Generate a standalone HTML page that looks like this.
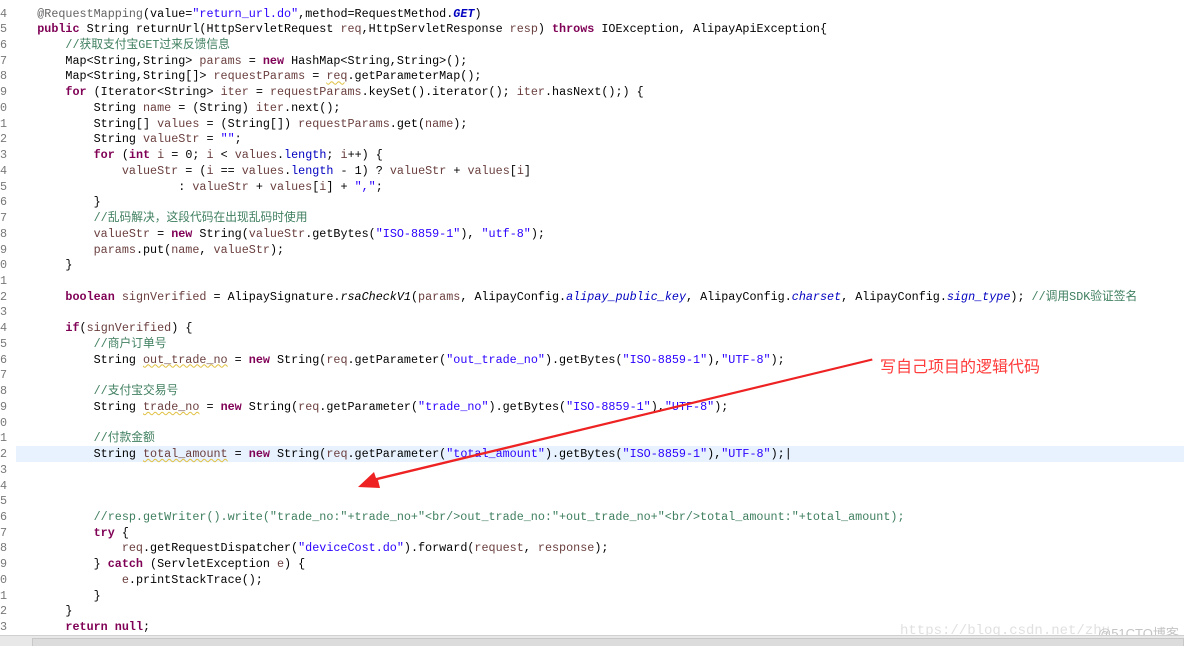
<!DOCTYPE html>
<html><head><meta charset="utf-8"><style>
html,body{margin:0;padding:0;background:#fff;width:1184px;height:646px;overflow:hidden;position:relative}
.hl{position:absolute;left:16px;top:446px;width:1168px;height:15.7px;background:#e8f2fe}
pre{margin:0;position:absolute;top:6.5px;font-family:"Liberation Mono","Noto Sans CJK SC",monospace;font-size:11.75px;line-height:15.74px;color:#000;white-space:pre}
#code{left:9px}
#num{left:0;color:#787878}
.k{color:#7f0055;font-weight:bold}
.s{color:#2a00ff}
.c{color:#3f7f5f}
.v{color:#6a3e3e}
.f{color:#0000c0;font-style:italic}
.a{color:#646464}
.u{text-decoration:underline wavy #e0c040;text-decoration-thickness:1px}
.sb{position:absolute;left:0;top:635px;width:1184px;height:11px;background:#e8e8e8;border-top:1px solid #d0d0d0}
.sb i{position:absolute;left:32px;top:2px;width:1150px;height:8px;background:#dcdcdc;border:1px solid #c8c8c8}
.note{position:absolute;left:880px;top:353px;font-family:"Noto Sans CJK SC",sans-serif;font-size:16px;color:#ff3b3b}
.wm{position:absolute;left:900px;top:623px;font-family:"Liberation Mono",monospace;font-size:14px;color:#e0e0e0}
.wm2{position:absolute;left:1098px;top:623px;font-family:"Liberation Sans","Noto Sans CJK SC",sans-serif;font-size:13px;color:#c4c4c4}
</style></head><body>
<div class="hl"></div>
<pre id="num">4
5
6
7
8
9
0
1
2
3
4
5
6
7
8
9
0
1
2
3
4
5
6
7
8
9
0
1
2
3
4
5
6
7
8
9
0
1
2
3</pre>
<pre id="code">    <span class="a">@RequestMapping</span>(value=<span class="s">"return_url.do"</span>,method=RequestMethod.<span class="f" style="font-weight:bold">GET</span>)
    <span class="k">public</span> String returnUrl(HttpServletRequest <span class="v">req</span>,HttpServletResponse <span class="v">resp</span>) <span class="k">throws</span> IOException, AlipayApiException{
        <span class="c">//获取支付宝GET过来反馈信息</span>
        Map&lt;String,String&gt; <span class="v">params</span> = <span class="k">new</span> HashMap&lt;String,String&gt;();
        Map&lt;String,String[]&gt; <span class="v">requestParams</span> = <span class="v u">req</span>.getParameterMap();
        <span class="k">for</span> (Iterator&lt;String&gt; <span class="v">iter</span> = <span class="v">requestParams</span>.keySet().iterator(); <span class="v">iter</span>.hasNext();) {
            String <span class="v">name</span> = (String) <span class="v">iter</span>.next();
            String[] <span class="v">values</span> = (String[]) <span class="v">requestParams</span>.get(<span class="v">name</span>);
            String <span class="v">valueStr</span> = <span class="s">""</span>;
            <span class="k">for</span> (<span class="k">int</span> <span class="v">i</span> = 0; <span class="v">i</span> &lt; <span class="v">values</span>.<span class="f" style="font-style:normal">length</span>; <span class="v">i</span>++) {
                <span class="v">valueStr</span> = (<span class="v">i</span> == <span class="v">values</span>.<span class="f" style="font-style:normal">length</span> - 1) ? <span class="v">valueStr</span> + <span class="v">values</span>[<span class="v">i</span>]
                        : <span class="v">valueStr</span> + <span class="v">values</span>[<span class="v">i</span>] + <span class="s">","</span>;
            }
            <span class="c">//乱码解决，这段代码在出现乱码时使用</span>
            <span class="v">valueStr</span> = <span class="k">new</span> String(<span class="v">valueStr</span>.getBytes(<span class="s">"ISO-8859-1"</span>), <span class="s">"utf-8"</span>);
            <span class="v">params</span>.put(<span class="v">name</span>, <span class="v">valueStr</span>);
        }

        <span class="k">boolean</span> <span class="v">signVerified</span> = AlipaySignature.<i>rsaCheckV1</i>(<span class="v">params</span>, AlipayConfig.<span class="f">alipay_public_key</span>, AlipayConfig.<span class="f">charset</span>, AlipayConfig.<span class="f">sign_type</span>); <span class="c">//调用SDK验证签名</span>

        <span class="k">if</span>(<span class="v">signVerified</span>) {
            <span class="c">//商户订单号</span>
            String <span class="v u">out_trade_no</span> = <span class="k">new</span> String(<span class="v">req</span>.getParameter(<span class="s">"out_trade_no"</span>).getBytes(<span class="s">"ISO-8859-1"</span>),<span class="s">"UTF-8"</span>);

            <span class="c">//支付宝交易号</span>
            String <span class="v u">trade_no</span> = <span class="k">new</span> String(<span class="v">req</span>.getParameter(<span class="s">"trade_no"</span>).getBytes(<span class="s">"ISO-8859-1"</span>),<span class="s">"UTF-8"</span>);

            <span class="c">//付款金额</span>
            String <span class="v u">total_amount</span> = <span class="k">new</span> String(<span class="v">req</span>.getParameter(<span class="s">"total_amount"</span>).getBytes(<span class="s">"ISO-8859-1"</span>),<span class="s">"UTF-8"</span>);|



            <span class="c">//resp.getWriter().write("trade_no:"+trade_no+"&lt;br/&gt;out_trade_no:"+out_trade_no+"&lt;br/&gt;total_amount:"+total_amount);</span>
            <span class="k">try</span> {
                <span class="v">req</span>.getRequestDispatcher(<span class="s">"deviceCost.do"</span>).forward(<span class="v">request</span>, <span class="v">response</span>);
            } <span class="k">catch</span> (ServletException <span class="v">e</span>) {
                <span class="v">e</span>.printStackTrace();
            }
        }
        <span class="k">return</span> <span class="k">null</span>;</pre>
<svg style="position:absolute;left:0;top:0" width="1184" height="646">
<polygon points="872,358.5 872.6,360.5 378,480 380,488 358,487 374,472 376,478" fill="#ee2222"/>
</svg>
<div class="note">写自己项目的逻辑代码</div>
<div class="wm">https://blog.csdn.net/zhu</div>
<div class="wm2">@51CTO博客</div>
<div class="sb"><i></i></div>
</body></html>
